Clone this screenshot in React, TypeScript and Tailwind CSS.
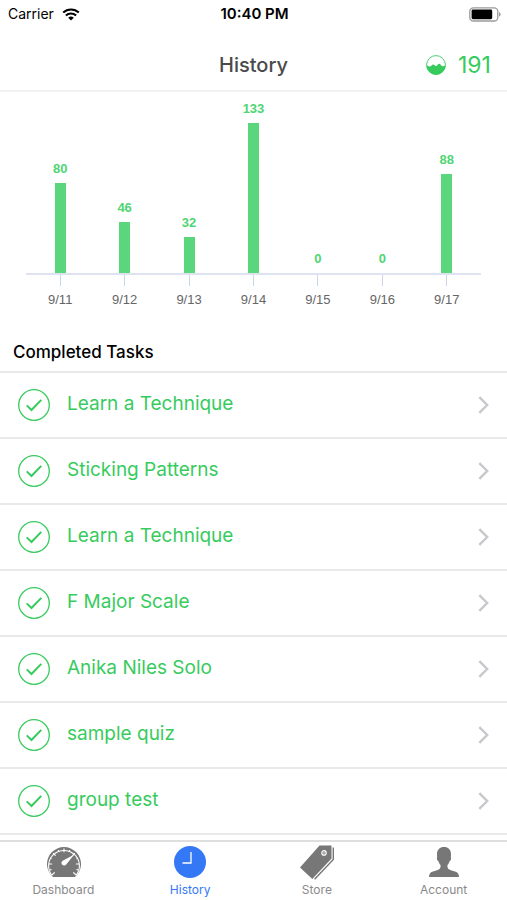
import React from "react";

const days = [
  { date: "9/11", value: 80 },
  { date: "9/12", value: 46 },
  { date: "9/13", value: 32 },
  { date: "9/14", value: 133 },
  { date: "9/15", value: 0 },
  { date: "9/16", value: 0 },
  { date: "9/17", value: 88 },
];

const MAX_VALUE = 133;
const MAX_BAR = 150;

const tasks = [
  "Learn a Technique",
  "Sticking Patterns",
  "Learn a Technique",
  "F Major Scale",
  "Anika Niles Solo",
  "sample quiz",
  "group test",
];

function WifiIcon() {
  return (
    <svg width="18" height="13" viewBox="0 0 18 13" fill="none" stroke="#000" aria-hidden="true">
      <path d="M1.2 4.6A11.2 11.2 0 0 1 16.8 4.6" strokeWidth="2.1" />
      <path d="M3.9 7.5A7.3 7.3 0 0 1 14.1 7.5" strokeWidth="2" />
      <path d="M9 12.6 6.2 9.8a4 4 0 0 1 5.6 0Z" fill="#000" stroke="none" />
    </svg>
  );
}

function BatteryIcon() {
  return (
    <svg width="32" height="15" viewBox="0 0 32 15" aria-hidden="true">
      <rect x="0.8" y="0.8" width="28" height="13.2" rx="3.6" fill="#fff" stroke="#9b9b9b" strokeWidth="1.3" />
      <rect x="2.6" y="2.6" width="20.6" height="9.6" rx="1.4" fill="#000" />
      <path d="M30 5.2c1.1.4 1.6 1.2 1.6 2.2s-.5 1.8-1.6 2.2Z" fill="#9b9b9b" />
    </svg>
  );
}

function WaveIcon() {
  return (
    <svg width="20" height="20" viewBox="0 0 20 20" aria-hidden="true">
      <circle cx="10" cy="10" r="9.4" fill="none" stroke="#37cb5e" strokeWidth="0.9" />
      <path
        d="M0.5 10.4C1.8 10.2 2.6 11.6 4 11.4c1.6-.2 1.8-2 3.2-2 1.300 0 1.500 1.600 2.800 1.600 1.300 0 1.700-2.300 3.200-2.300 1.500 0 1.700 2.300 3.300 2.500 1.200.1 1.800-.9 3-.8A9.500 9.500 0 0 1 .5 10.400Z"
        fill="#37cb5e"
      />
    </svg>
  );
}

function CheckIcon() {
  return (
    <svg className="shrink-0" width="32" height="32" viewBox="0 0 32 32" fill="none" stroke="#37cb5e" aria-hidden="true">
      <circle cx="16" cy="16" r="15.3" strokeWidth="1.3" />
      <path d="M8.7 16.4 13.5 21 23.300 10.900" strokeWidth="2" />
    </svg>
  );
}

function ChevronIcon() {
  return (
    <svg width="11" height="18" viewBox="0 0 11 18" fill="none" stroke="#c7c7cc" strokeWidth="2.4" aria-hidden="true">
      <path d="M1.300 1.200 9.200 9 1.300 16.800" />
    </svg>
  );
}

function GaugeIcon() {
  return (
    <svg width="36" height="34" viewBox="0 0 36 34" aria-hidden="true">
      <path d="M8 32A17 17 0 1 1 30 32Z" fill="#777" />
      <path d="M6.600 30A15.400 15.400 0 1 1 31.400 30" fill="none" stroke="#fff" strokeWidth="1.100" />
      <path
        d="M19 3.600v3.600M3.700 19h3.400M34.300 19h-3.400M8.200 8.200l2.400 2.400M29.800 8.200l-2.400 2.400M13.200 5.100l.6 1.500M24.800 5.100l-.6 1.500M5 13l1.500.6M33 13l-1.500.6M4.900 25l1.500-.6M33.100 25l-1.500-.6M6.900 30l2.800-2.600M31.100 30l-2.800-2.600"
        stroke="#fff"
        strokeWidth="1.200"
      />
      <path d="M29.300 9.600 21.200 19.400a2.600 2.600 0 1 1-3.500-3.700Z" fill="#fff" />
    </svg>
  );
}

function ClockIcon() {
  return (
    <svg width="34" height="34" viewBox="0 0 34 34" aria-hidden="true">
      <circle cx="17" cy="17" r="16" fill="#3478f6" />
      <path d="M18 7V18H9.5" fill="none" stroke="#fff" strokeWidth="1.3" />
    </svg>
  );
}

function TagsIcon() {
  return (
    <svg width="36" height="36" viewBox="0 0 36 36" aria-hidden="true">
      <path d="M20.500 1.500H32.500V14.500L13.300 35 1 23.500Z" fill="#777" />
      <path d="M34.300 3.500V15.400L15.600 35.300" fill="none" stroke="#777" strokeWidth="1.400" />
      <circle cx="25" cy="8.900" r="2.200" fill="#777" stroke="#fff" strokeWidth="1.200" />
      <path d="M25 7.800v2.200" stroke="#fff" strokeWidth="0.800" />
    </svg>
  );
}

function PersonIcon() {
  return (
    <svg width="32" height="34" viewBox="0 0 32 34" aria-hidden="true">
      <path
        d="M16 2c4.200 0 7 2.700 7 7 0 1.200 0 2.200-.2 3.200.6.300.5 1.800-.2 3-.3.500-.6.700-.9.800-.5 1.800-1.300 3-2.200 3.900-.3 2.300.2 3.900 2.300 4.900 3.200 1.400 7.200 1.600 8.500 4.100.4.900.7 1.900.7 3.100H1c0-1.200.3-2.200.7-3.100 1.300-2.500 5.300-2.700 8.500-4.100 2.100-1 2.600-2.600 2.300-4.900-.9-.9-1.700-2.100-2.200-3.900-.3-.1-.6-.3-.9-.8-.7-1.200-.8-2.700-.2-3C9 11.200 9 10.200 9 9c0-4.300 2.800-7 7-7Z"
        fill="#777"
      />
    </svg>
  );
}

const tabs = [
  { label: "Dashboard", icon: <GaugeIcon />, active: false },
  { label: "History", icon: <ClockIcon />, active: true },
  { label: "Store", icon: <TagsIcon />, active: false },
  { label: "Account", icon: <PersonIcon />, active: false },
];

export default function App() {
  return (
    <div className="flex min-h-screen flex-col bg-white font-['Inter',sans-serif] text-black">
      <div className="grid h-7 grid-cols-3 items-center pl-2 pr-1.5 text-sm">
        <div className="flex items-center gap-2">
          <span>Carrier</span>
          <WifiIcon />
        </div>
        <span className="text-center text-[15px] font-semibold">10:40 PM</span>
        <div className="flex justify-end">
          <BatteryIcon />
        </div>
      </div>

      <header className="grid h-16 grid-cols-3 items-center border-b-2 border-[#f1f1f1] px-4 pt-3">
        <h1 className="col-start-2 text-center text-xl font-medium text-[#4a4a4a]">History</h1>
        <div className="flex items-center justify-end gap-3 text-[23px] leading-7 text-[#37cb5e]">
          <WaveIcon />
          <span>191</span>
        </div>
      </header>

      <main className="flex-1">
        <section aria-label="Points per day" className="px-[26px] pt-2 font-['Liberation_Sans',sans-serif] text-[13px] leading-4">
          <div className="flex h-[175px] items-end border-b-2 border-[#dfe3f0] px-0.5">
            {days.map((day) => (
              <div key={day.date} className="flex flex-1 flex-col items-center gap-1.5 font-bold text-[#4fd574]">
                <span>{day.value}</span>
                <div className="w-[11px] bg-[#5ad67d]" style={{ height: Math.floor((day.value / MAX_VALUE) * MAX_BAR) }} />
              </div>
            ))}
          </div>
          <div className="flex px-0.5 text-[#666]">
            {days.map((day) => (
              <div key={day.date} className="flex flex-1 flex-col items-center gap-1.5">
                <div className="h-[11px] w-px bg-[#ccd6eb]" />
                <span>{day.date}</span>
              </div>
            ))}
          </div>
        </section>

        <h2 className="px-[13px] pb-[7px] pt-8 text-[17px] font-medium leading-6">Completed Tasks</h2>
        <ul className="border-t-2 border-[#e9e9e9]">
          {tasks.map((task, i) => (
            <li key={i} className="border-b-2 border-[#e9e9e9]">
              <button type="button" className="flex h-16 w-full items-center gap-[17px] px-[18px] text-left">
                <CheckIcon />
                <span className="flex-1 pb-0.5 text-[19px] leading-7 text-[#37cb5e]">{task}</span>
                <ChevronIcon />
              </button>
            </li>
          ))}
        </ul>
      </main>

      <nav className="grid grid-cols-4 border-t-2 border-[#dedede]">
        {tabs.map((tab) => (
          <a
            key={tab.label}
            href="#"
            aria-current={tab.active ? "page" : undefined}
            className={
              tab.active
                ? "flex flex-col items-center gap-0.5 pb-0.5 pt-0.5 text-xs text-[#3478f6]"
                : "flex flex-col items-center gap-0.5 pb-0.5 pt-0.5 text-xs text-[#8a8a8a]"
            }
          >
            <span className="flex h-9 items-center">{tab.icon}</span>
            <span>{tab.label}</span>
          </a>
        ))}
      </nav>
    </div>
  );
}
